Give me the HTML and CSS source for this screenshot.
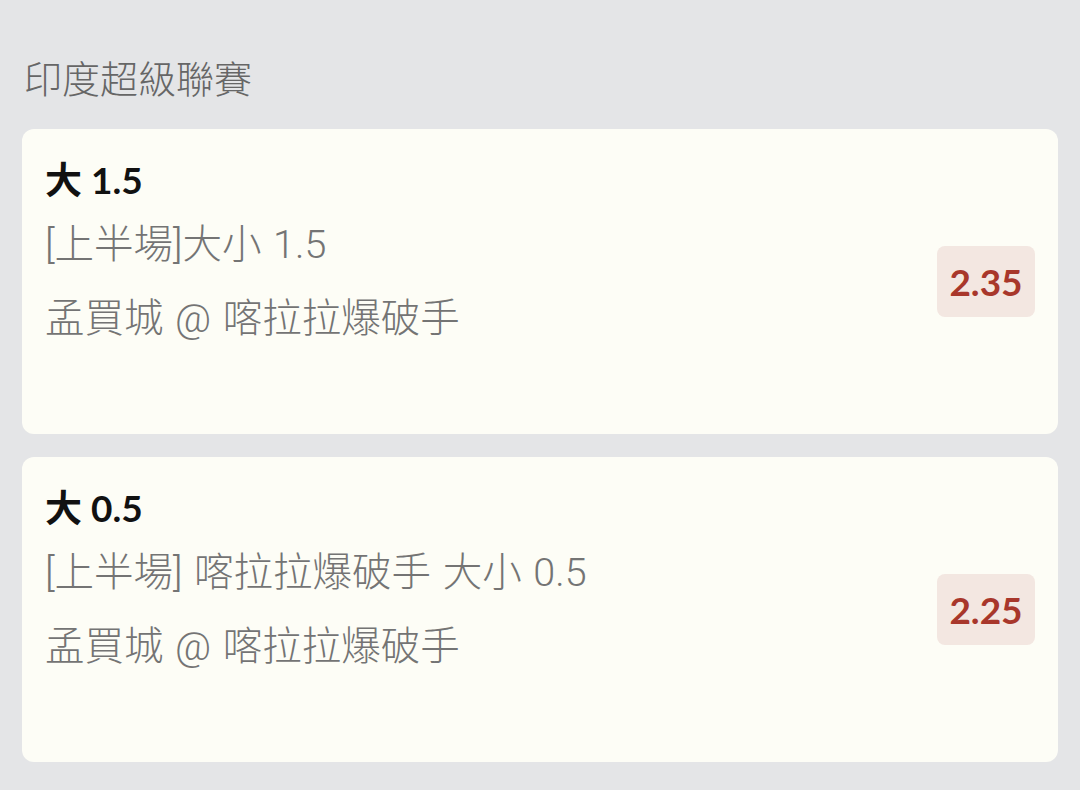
FILE: index.html
```html
<!DOCTYPE html>
<html lang="zh-Hant">
<head>
  <meta charset="UTF-8">
  <meta name="viewport" content="width=device-width, initial-scale=1.0">
  <title>印度超級聯賽</title>
  <link rel="stylesheet" href="styles.css">
</head>
<body>
  <div class="page">
    <h2 class="league">印度超級聯賽</h2>

    <div class="bet-list">
      <div class="bet-card">
        <div class="bet-info">
          <div class="bet-pick">大 1.5</div>
          <div class="bet-market">[上半場]大小 1.5</div>
          <div class="bet-match">孟買城 @ 喀拉拉爆破手</div>
        </div>
        <div class="odds">2.35</div>
      </div>

      <div class="bet-card">
        <div class="bet-info">
          <div class="bet-pick">大 0.5</div>
          <div class="bet-market">[上半場] 喀拉拉爆破手 大小 0.5</div>
          <div class="bet-match">孟買城 @ 喀拉拉爆破手</div>
        </div>
        <div class="odds">2.25</div>
      </div>
    </div>
  </div>
</body>
</html>
```

FILE: styles.css
```css
body {
  margin: 0;
  background-color: #e4e5e7;
  font-family: 'Lato', 'Noto Sans CJK TC', sans-serif;
}

.page {
  padding: 55px 22px 28px;
}

.league {
  margin: 0 0 24px 2px;
  font-family: 'Roboto', 'Noto Sans CJK TC', sans-serif;
  font-size: 38px;
  line-height: 50px;
  font-weight: 300;
  color: #666666;
}

.bet-list {
  display: flex;
  flex-direction: column;
  gap: 23px;
}

.bet-card {
  box-sizing: border-box;
  height: 305px;
  padding: 26px 23px;
  background: #fdfdf6;
  border-radius: 12px;
  display: flex;
  justify-content: space-between;
  align-items: center;
}

.bet-info {
  align-self: flex-start;
}

.bet-pick {
  font-size: 37px;
  line-height: 50px;
  font-weight: 700;
  color: #111111;
}

.bet-market,
.bet-match {
  font-family: 'Roboto', 'Noto Sans CJK TC', sans-serif;
  font-size: 39.5px;
  line-height: 50px;
  font-weight: 300;
  word-spacing: 2px;
  color: #747474;
}

.bet-market {
  margin-top: 15px;
}

.bet-match {
  margin-top: 24px;
}

.odds {
  width: 98px;
  height: 71px;
  border-radius: 8px;
  background: #f3e7e1;
  color: #a8372b;
  font-size: 37px;
  font-weight: 700;
  display: flex;
  align-items: center;
  justify-content: center;
}
```
